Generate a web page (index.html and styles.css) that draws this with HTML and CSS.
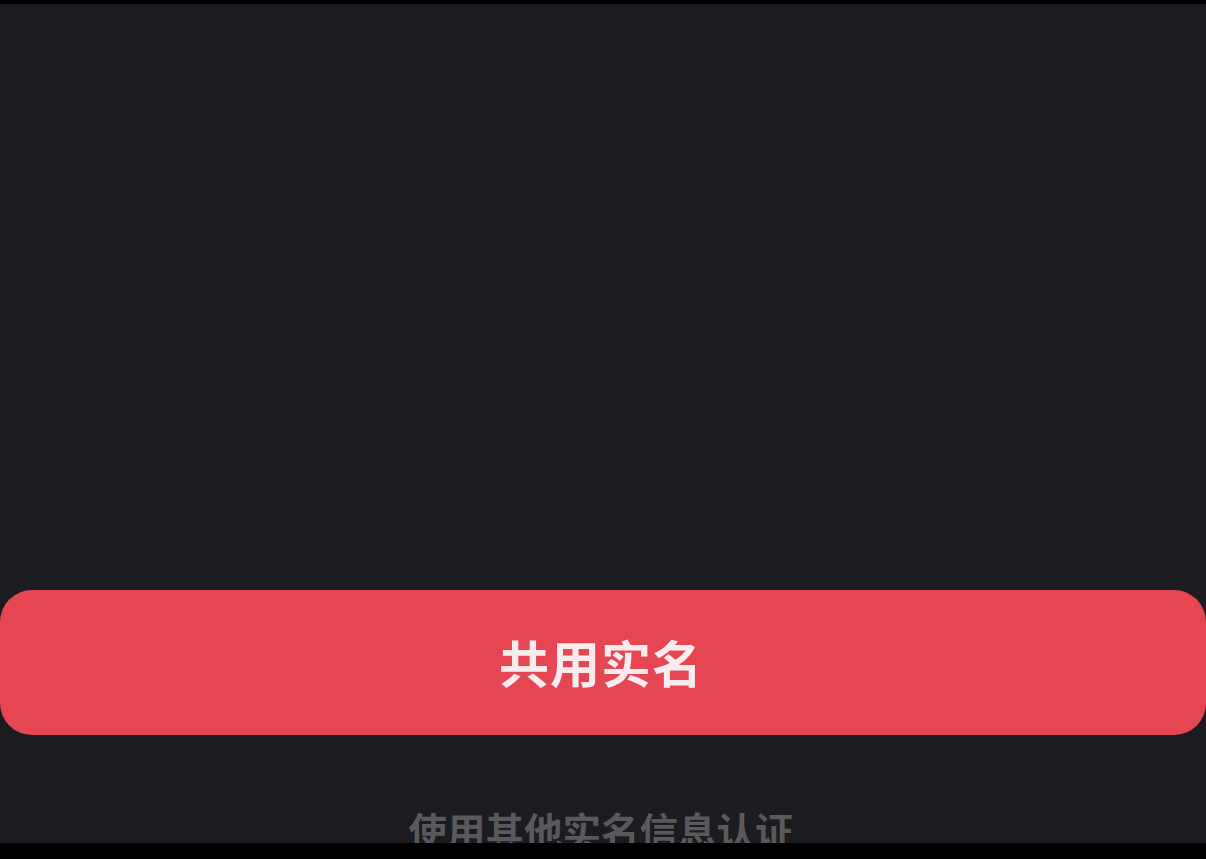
FILE: index.html
```html
<!DOCTYPE html>
<html lang="zh-CN">
<head>
<meta charset="utf-8">
<title>共用实名</title>
<link rel="stylesheet" href="styles.css">
</head>
<body>
<div class="screen">
  <div class="bar-top"></div>
  <main class="content">
    <button class="primary" type="button">共用实名</button>
    <a class="secondary" href="#">使用其他实名信息认证</a>
  </main>
  <div class="bar-bottom"></div>
</div>
</body>
</html>
```

FILE: styles.css
```css
* { box-sizing: border-box; }
html, body {
  margin: 0;
  padding: 0;
  background: #000;
}
.screen {
  width: 1206px;
  height: 859px;
  display: grid;
  grid-template-rows: 4px 839px 16px;
  font-family: "Noto Sans CJK SC", "Noto Sans", sans-serif;
}
.bar-top, .bar-bottom { background: #000; }
.content {
  background: #1c1b1f;
  overflow: hidden;
  display: flex;
  flex-direction: column;
  align-items: center;
  padding-top: 586px;
}
.primary {
  width: 1206px;
  height: 145px;
  border: none;
  border-radius: 32px;
  background: #e64552;
  color: #f8ecee;
  font-family: inherit;
  font-size: 50px;
  font-weight: 700;
  letter-spacing: 1px;
  display: flex;
  align-items: center;
  justify-content: center;
  padding: 0 4px 4px 0;
  flex-shrink: 0;
}
.secondary {
  margin-top: 72px;
  color: #59595d;
  font-size: 38.5px;
  line-height: 44px;
  font-weight: 700;
  text-decoration: none;
  padding-right: 4px;
  flex-shrink: 0;
}
```
